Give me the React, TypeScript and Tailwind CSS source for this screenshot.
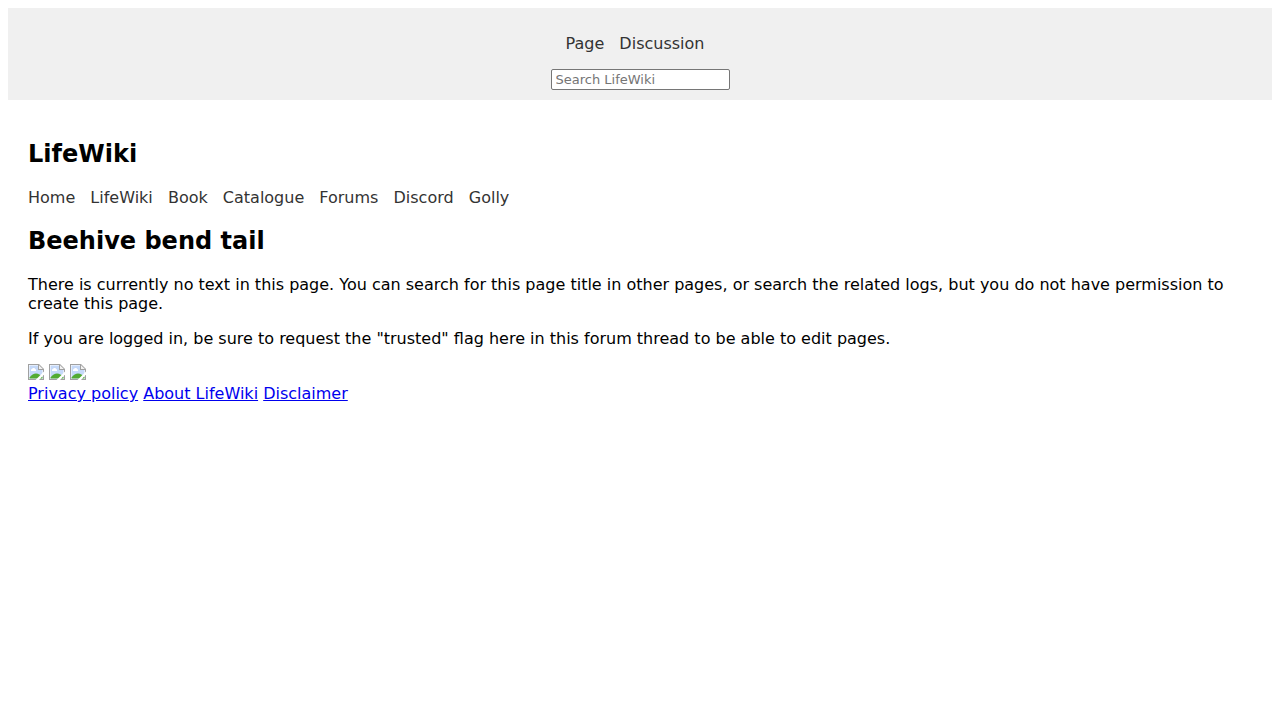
const tabs = ["Page", "Discussion"];
const links = ["Home", "LifeWiki", "Book", "Catalogue", "Forums", "Discord", "Golly"];
const policies = ["Privacy policy", "About LifeWiki", "Disclaimer"];

function BrokenImage() {
  return (
    <svg className="inline size-4 align-baseline" viewBox="0 0 16 16" aria-hidden="true">
      <path d="M0 0H11L16 5V16H0Z" fill="#a0a0a0" />
      <path d="M1 1H10V6H15V15H1Z" fill="#fff" />
      <path d="M1.500 1.500H10V6H14.500V14.500H1.500Z" fill="#c5d9f9" />
      <path d="M11 1.200L14.800 5H11Z" fill="#f2f2f2" />
      <path d="M3 7V6Q3 5 4 5Q4.500 3.500 6 4Q7 4 7 5Q8 5 8 6V7Z" fill="#fff" />
      <path d="M1.500 14.500V13.500Q4.500 9.500 8 9.500Q11.500 9.500 14.500 13V14.500Z" fill="#52ab32" />
      <path d="M16 7.500V10.500L11 16H7.500L11 12.500Z" fill="#fff" />
    </svg>
  );
}

function NavLinks({ items }: { items: string[] }) {
  return (
    <ul className="text-[#333]">
      {items.map((item) => (
        <li key={item} className="mr-2.5 inline">
          <a href="#">{item}</a>
        </li>
      )).flatMap((el) => [el, " "])}
    </ul>
  );
}

export default function App() {
  return (
    <div className="p-2 font-['DejaVu_Sans',sans-serif] text-base leading-[19px] text-black">
      <header className="flex flex-col items-center gap-4 bg-[#f0f0f0] px-2.5 pt-[26px] pb-2.5">
        <nav aria-label="Page tabs">
          <NavLinks items={tabs} />
        </nav>
        <input
          type="text"
          aria-label="Search LifeWiki"
          placeholder="Search LifeWiki"
          className="h-[21px] w-[179px] rounded-[2px] border border-[#767676] bg-white px-1 text-[13px] leading-[15px] placeholder:text-[#757575]"
        />
      </header>
      <main className="px-5 pt-10">
        <h2 className="text-2xl leading-7 font-bold">LifeWiki</h2>
        <nav aria-label="Site" className="mt-5">
          <NavLinks items={links} />
        </nav>
        <h2 className="mt-5 text-2xl leading-7 font-bold">Beehive bend tail</h2>
        <p className="mt-5">
          There is currently no text in this page. You can search for this page title in other pages, or search the related logs, but you do not have permission to create this page.
        </p>
        <p className="mt-4">
          If you are logged in, be sure to request the "trusted" flag here in this forum thread to be able to edit pages.
        </p>
        <footer className="mt-4">
          <div className="flex gap-[5px]">
            <BrokenImage />
            <BrokenImage />
            <BrokenImage />
          </div>
          <div className="mt-1">
            {policies.flatMap((p) => [
              <a key={p} href="#" className="text-[#0000ee] underline">{p}</a>,
              " ",
            ])}
          </div>
        </footer>
      </main>
    </div>
  );
}
